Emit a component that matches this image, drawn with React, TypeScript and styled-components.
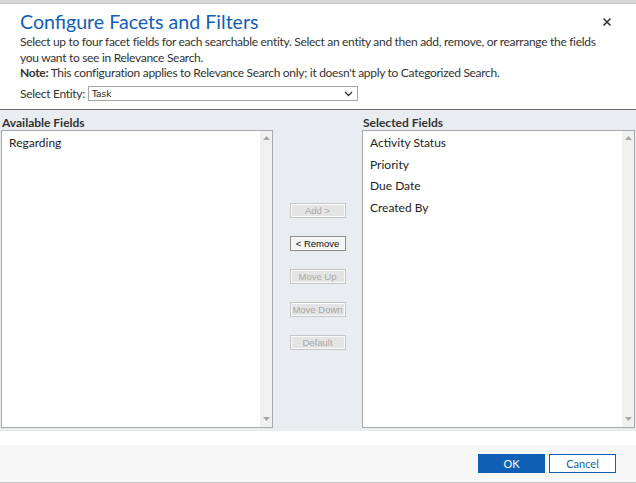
import React from "react";
import styled, { createGlobalStyle } from "styled-components";

const Global = createGlobalStyle`
  html, body { margin: 0; padding: 0; background: #ffffff; }
  body { font-family: "Lato", "Open Sans", sans-serif; color: #333; }
  * { box-sizing: border-box; }
`;

const Page = styled.div`
  width: 636px;
  height: 483px;
  display: flex;
  flex-direction: column;
  overflow: hidden;
  background: #fff;
`;

const BackStrip = styled.div`
  height: 4px;
  background: #d9d9d9;
  border-bottom: 1px solid #c4c4c4;
`;

const Header = styled.div`
  padding: 6px 0 0 20px;
  position: relative;
  height: 105px;
`;

const Title = styled.h1`
  margin: 0;
  font-family: "Lato", sans-serif;
  font-weight: 400;
  font-size: 19.6px;
  line-height: 24px;
  color: #1160b7;
`;

const Close = styled.div`
  position: absolute;
  right: 24px;
  top: 13px;
  width: 10px;
  height: 10px;
  display: flex;
`;

const Desc = styled.p`
  margin: 0;
  font-size: 12px;
  letter-spacing: -0.3px;
  line-height: 15.5px;
  color: #333;
  width: 582px;
`;

const Note = styled.p`
  margin: 0;
  font-size: 12px;
  letter-spacing: -0.3px;
  line-height: 16px;
  color: #333;
  b { font-weight: 700; }
`;

const EntityRow = styled.div`
  display: flex;
  align-items: center;
  margin-top: 5px;
  font-size: 12px;
  letter-spacing: -0.3px;
`;

const Select = styled.div`
  margin-left: 3px;
  width: 270px;
  height: 15px;
  border: 1px solid #a6a6a6;
  display: flex;
  align-items: center;
  justify-content: space-between;
  padding: 0 4px 0 3px;
  font-family: "DejaVu Sans", sans-serif;
  font-size: 9px;
  letter-spacing: 0;
  color: #222;
`;

const Panel = styled.div`
  height: 322px;
  background: #e9ecf0;
  border-top: 1px solid #666;
  display: grid;
  grid-template-columns: 273px 1fr 273px;
  padding-right: 1px;
`;

const Column = styled.div<{ $pad: number }>`
  display: flex;
  flex-direction: column;
  padding-left: ${(p) => p.$pad}px;
  padding-top: 5px;
`;

const Label = styled.div`
  font-weight: 700;
  font-size: 12px;
  line-height: 15px;
  padding-left: 1px;
  color: #333;
`;

const ListBox = styled.div`
  height: 298px;
  border: 1px solid #a8a8a8;
  background: #fff;
  display: flex;
`;

const Items = styled.div`
  flex: 1;
  padding: 1px 0 0 7px;
`;

const Item = styled.div`
  font-size: 12px;
  line-height: 21.5px;
  color: #222;
`;

const Scroll = styled.div`
  width: 12px;
  background: #f0f0f0;
  display: flex;
  flex-direction: column;
  justify-content: space-between;
  align-items: center;
  padding: 5px 0 6px;
`;

const Buttons = styled.div`
  display: flex;
  flex-direction: column;
  align-items: center;
  gap: 18px;
  padding-top: 93px;
`;

const SmallButton = styled.div<{ $enabled?: boolean }>`
  width: 56px;
  height: 15px;
  border: 1px solid ${(p) => (p.$enabled ? "#8a8a8a" : "#c6c6c6")};
  background: ${(p) => (p.$enabled ? "#f4f4f4" : "#e4e4e4")};
  color: ${(p) => (p.$enabled ? "#111" : "#a8a8a8")};
  font-family: "Liberation Sans", sans-serif;
  font-size: 9.5px;
  line-height: 13px;
  text-align: center;
  box-shadow: inset 0 0 0 1px #fafafa;
`;

const Spacer = styled.div`
  height: 14px;
`;

const Footer = styled.div`
  flex: 1;
  background: #f7f7f7;
  border-bottom: 1px solid #c8c8c8;
  display: flex;
  justify-content: flex-end;
  align-items: flex-start;
  gap: 4px;
  padding: 9px 20px 0 0;
`;

const DialogButton = styled.div<{ $primary?: boolean }>`
  width: 67px;
  height: 19px;
  border: 1px solid #0f5fb4;
  background: ${(p) => (p.$primary ? "#0f5fb4" : "#fff")};
  color: ${(p) => (p.$primary ? "#fff" : "#0f5fb4")};
  font-size: 11px;
  line-height: 17px;
  text-align: center;
`;

const Up = () => (
  <svg width="7" height="4" viewBox="0 0 7 4">
    <path d="M0 4 L3.5 0 L7 4 Z" fill="#a6a6a6" />
  </svg>
);
const Down = () => (
  <svg width="7" height="4" viewBox="0 0 7 4">
    <path d="M0 0 L3.5 4 L7 0 Z" fill="#a6a6a6" />
  </svg>
);

const List: React.FC<{ items: string[] }> = ({ items }) => (
  <ListBox>
    <Items>
      {items.map((i) => (
        <Item key={i}>{i}</Item>
      ))}
    </Items>
    <Scroll>
      <Up />
      <Down />
    </Scroll>
  </ListBox>
);

export default function App() {
  return (
    <Page>
      <Global />
      <BackStrip />
      <Header>
        <Title>Configure Facets and Filters</Title>
        <Close>
          <svg width="10" height="10" viewBox="0 0 10 10">
            <path d="M1.5 1.5 L8.5 8.5 M8.5 1.5 L1.5 8.5" stroke="#333" strokeWidth="1.6" />
          </svg>
        </Close>
        <Desc>
          Select up to four facet fields for each searchable entity. Select an entity and then add, remove, or rearrange the fields you want to see in Relevance Search.
        </Desc>
        <Note>
          <b>Note:</b> This configuration applies to Relevance Search only; it doesn't apply to Categorized Search.
        </Note>
        <EntityRow>
          Select Entity:
          <Select>
            <span>Task</span>
            <svg width="9" height="6" viewBox="0 0 9 6">
              <path d="M1 1 L4.5 4.5 L8 1" stroke="#333" strokeWidth="1.3" fill="none" />
            </svg>
          </Select>
        </EntityRow>
      </Header>
      <Panel>
        <Column $pad={1}>
          <Label>Available Fields</Label>
          <List items={["Regarding"]} />
        </Column>
        <Buttons>
          <SmallButton>Add &gt;</SmallButton>
          <SmallButton $enabled>&lt; Remove</SmallButton>
          <SmallButton>Move Up</SmallButton>
          <SmallButton>Move Down</SmallButton>
          <SmallButton>Default</SmallButton>
        </Buttons>
        <Column $pad={0}>
          <Label>Selected Fields</Label>
          <List items={["Activity Status", "Priority", "Due Date", "Created By"]} />
        </Column>
      </Panel>
      <Spacer />
      <Footer>
        <DialogButton $primary>OK</DialogButton>
        <DialogButton>Cancel</DialogButton>
      </Footer>
    </Page>
  );
}
